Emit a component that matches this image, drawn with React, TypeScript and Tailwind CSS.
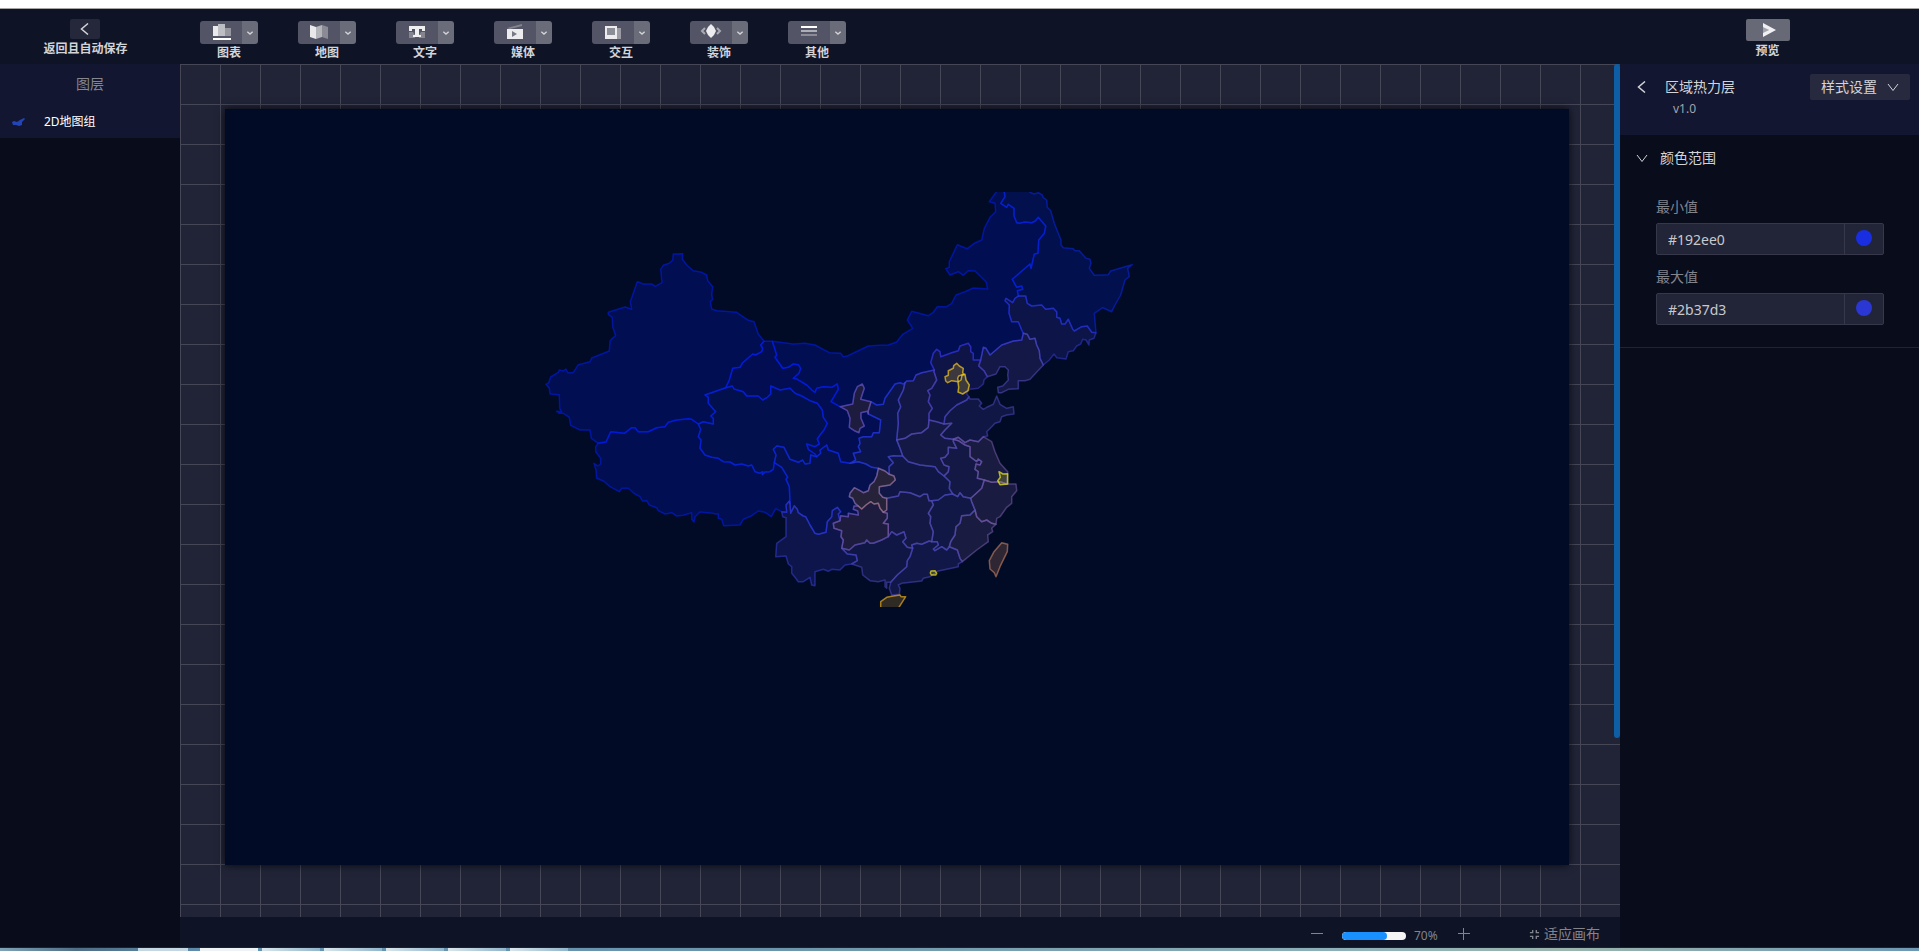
import type { ReactNode } from "react";

const FONT = "font-['Noto_Sans','Noto_Sans_CJK_SC',sans-serif]";

/* Border arcs, digitised on four survey sheets at three units per pixel. */
const SHEETS: Record<string, [number, number]> = {
  W: [1590, 720],
  C: [2280, 1020],
  N: [2640, 540],
  E: [2460, 1110],
};

const ARCS: Record<string, string> = {
  xjOut:
    "W 702,304 685,282 672,245 655,241 620,217 560,212 545,207 541,185 548,178 545,165 548,140 533,122 530,105 515,97 490,92 470,75 457,57 458,41 430,42 428,60 418,70 400,76 392,88 396,128 376,139 365,132 340,132 322,125 301,185 305,208 285,201 235,217 235,223 247,232 248,260 257,287 247,295 240,303 238,333 185,354 180,365 145,374 130,398 113,398 108,387 100,393 88,390 85,397 62,411 56,428 48,433 58,445 60,462 88,464 89,505 94,515 80,514 88,520 100,520 118,532 122,556 150,570 180,570 184,595 205,610",
  xjXz: "W 205,610 228,606 242,575 283,580 305,563 315,563 325,575 355,575 380,563 405,560 415,547 440,540 475,536 485,538 505,552",
  xjQh: "W 505,552 520,545 550,552 550,535 542,528 557,515 535,490 535,472 525,465 587,443",
  xjGs: "W 587,443 598,420 608,385 630,382 638,368 668,342 677,345 695,335 698,325 692,315 702,304",
  gsOut: "W 702,304 727,304",
  xzOut:
    "W 205,610 197,620 197,635 212,655 212,672 203,678 192,670 198,690 200,715 222,724 240,740 268,755 275,745 295,745 315,762 330,770 337,783 350,782 358,795 380,803 385,812 405,822 425,818 440,828 460,826 485,818 485,838 492,846 495,830 510,816 548,820 557,822 565,822 565,835 575,838 581,857 630,855 640,838 665,827 685,813 705,817 724,830 737,806 755,815",
  xzQh: "W 505,552 512,568 505,590 513,600 510,625 525,645 545,652 565,655 580,665 600,666 615,675 635,672 655,678 665,675 675,695 690,700 698,695 697,704 705,696 720,695 730,688 733,668",
  xzSc: "W 733,668 755,682 773,712 768,718 778,740 780,790",
  xzYn: "W 755,815 770,817 768,795 778,783 780,790",
  gsQh: "C -103,143 -83,138 -78,147 -50,155 -40,168 -5,168 8,180 22,172 32,162 32,138 60,150 90,145 105,160 125,168 150,182 172,190 187,210 190,232 202,250 192,270 180,285 172,297 178,312 165,320 140,312 145,328 165,342 170,350",
  qhSc: "C 170,350 152,345 150,370 135,372 128,360 115,367 90,358 72,322 50,318 40,328 48,345 43,368",
  gsSc: "C 170,350 182,340 180,330 200,315 205,330 235,340 242,365 270,370",
  gsSn: "C 270,370 287,360 280,340 302,335 295,320 300,310 297,295 310,290 335,290 340,278 358,278 362,240 325,222",
  gsNm: "C 37,4 50,45 45,52 68,85 85,82 100,72 115,74 122,85 117,100 100,115 112,118 140,135 155,150 165,157 170,145 190,140 215,142 232,132 235,148 213,185 240,200",
  nxNm: "C 240,200 278,192 283,160 292,140 307,132 313,145 302,178 333,185",
  nxSn: "C 333,185 325,212 325,222",
  nxGs: "C 325,222 322,214 303,218 303,235 313,258 300,265 297,278 283,272 268,262 270,235 262,212 240,200",
  nmSn: "C 333,185 350,195 370,193 375,175 405,132 420,128 430,132 435,128",
  nmOutW: "C 37,4 100,12 135,10 165,15 208,38 242,40 250,50 262,48 325,18 360,16",
  nmOutN:
    "N 0,496 25,495 50,486 68,463 98,445 82,420 95,394 145,407 160,397 172,380 200,380 215,370 228,345 255,335 280,324 323,327 318,305 285,273 265,272 250,286 235,275 210,285 197,266 208,262 208,245 232,194 262,206 283,190 305,180 313,145 330,112 347,95 345,70 328,65 348,37 350,20",
  nmHl: "N 415,348 412,332 428,328 425,318 410,322 397,298 450,252 453,265 463,222 474,220 476,180 493,160 497,138 475,112 466,123 455,128 435,126 418,130 410,128 402,108 402,85 385,73 380,82 362,70 375,50 370,20",
  hlOut:
    "N 370,20 440,20 450,37 462,42 475,38 487,45 490,53 500,60 502,82 512,92 523,130 543,180 543,195 550,203 580,206 585,212 598,212 618,235 630,238 633,250 628,265 643,286 685,284 692,273 720,265 745,257 757,254 743,265 748,290 735,300 722,345 705,375 695,395 668,383 643,400 648,458",
  hlJl: "N 415,348 437,348 442,370 455,378 485,375 497,388 520,385 530,395 530,412 540,415 545,432 555,432 565,418 578,448 583,453 605,440 622,438 635,457 648,458",
  nmJl: "N 430,460 425,450 415,425 395,425 387,400 388,375 375,362 378,355 398,368 405,355 415,348",
  jlOut: "N 648,458 642,475 628,480 627,495 618,480 608,478 602,492 590,498 580,512 565,515 558,537 530,533 522,522 508,540 490,555",
  jlLn: "N 430,460 442,463 450,478 465,475 470,495 478,512 480,535 490,555",
  nmLn: "N 302,540 310,502 318,505 330,525 345,512 365,495 385,488 400,483 425,480 430,460",
  lnOut: "N 490,555 450,598 435,602 415,602 415,626 385,628 365,638 355,638 353,622 368,618 385,600 383,585 385,570 375,560 360,560 348,582 322,590",
  lnHe: "N 302,540 296,558 312,572 322,590",
  heOut: "N 322,590 312,600 310,612 295,625 270,628 262,635 260,642 267,650",
  nmHe: "N 163,570 152,548 160,520 170,508 180,515 182,530 215,518 235,512 240,498 265,490 272,500 272,515 280,520 280,540 302,540",
  nmSx: "N 75,608 80,603 100,602 108,585 125,578 163,570",
  sxSn: "C 435,128 430,150 415,180 422,200 413,220 415,250 410,300",
  sxHa: "E 230,210 255,205 275,192 305,188 325,172 327,150",
  sxHe: "E 327,150 327,130 337,115 325,95 330,75 323,62 335,55 350,30 342,5 343,0",
  snHa: "E 230,210 240,235 248,258",
  heHa: "E 327,150 350,155 372,162",
  heSd: "E 447,80 440,90 410,105 390,122 375,140 372,162",
  sdOut: "E 447,80 450,87 475,87 485,100 478,108 490,118 500,112 520,103 530,78 540,103 560,115 580,110 582,132 560,135 545,140 540,155 525,160 515,170 500,185 503,198 490,200",
  sdHa: "E 372,162 395,160 375,180 362,195 375,205 400,208",
  sdJs: "E 490,200 475,215 450,210 435,218 415,202 400,208",
  haAh: "E 400,208 400,215 410,235 385,232 385,250 375,262 362,265 372,285 387,290 385,305 372,318",
  ahJs: "E 400,208 415,212 435,225 450,230 450,260 470,275 475,267 485,275 480,285 468,282 465,298 475,305 472,325 493,330",
  jsOut: "E 490,200 515,215 525,245 540,280 563,305 560,342",
  jsZj: "E 493,330 515,337 540,335 560,342",
  zjOut: "E 560,342 588,342 590,362 575,380 575,400 560,412 540,440 530,445 528,463",
  zjAh: "E 493,330 485,355 460,378 452,385",
  zjJx: "E 452,385 455,395 465,420",
  zjFj: "E 465,420 470,440 485,455 500,450 515,460 528,463",
  fjOut: "E 528,463 515,475 518,485 503,495 505,515 470,540 427,575",
  fjJx: "E 465,420 450,435 425,437 420,460 408,470 405,495 392,515 388,530",
  fjGd: "E 388,530 412,540 420,565 427,575",
  ahJx: "E 452,385 430,380 420,368 413,380 398,372",
  ahHb: "E 372,318 390,335 388,355 398,372",
  haHb: "E 248,258 265,275 300,285 345,290 355,305 372,318",
  hbJx: "E 398,372 375,375 355,390 335,392",
  hbHn: "E 200,385 235,378 240,365 270,368 300,380 310,373 322,373 327,392 335,392",
  snHb: "C 388,403 387,380 400,368 385,350 400,347 428,348",
  cqSn: "C 355,385 375,393 388,403",
  cqHb: "C 388,403 402,408 406,420 390,435 358,440 358,460 368,472 380,475",
  cqHn: "C 380,475 380,510 370,517",
  cqGz: "C 370,517 360,505 355,490 342,492 332,485 318,495 305,507 295,498",
  cqSc: "C 295,498 285,490 278,475 268,470 270,460 283,443 300,452 310,458 325,452 330,435 342,425 350,408 355,385",
  scSn: "C 270,370 295,365 318,372 335,382 355,385",
  scYn: "C 90,490 92,520 103,497 112,508 115,518 130,528 137,530 150,555 165,580 175,583 198,577 202,545 215,530 217,512 232,502 242,515 235,522 240,542",
  scGz: "C 240,542 242,527 265,530 265,520 295,525 293,513 280,508 282,498 295,498",
  ynOut: "C 65,515 68,530 78,533 78,590 50,610 47,650 78,648 85,672 95,680 95,700 105,712 115,725 130,725 150,712 155,735 165,737 165,695 190,688 205,694 215,688 240,690 255,675 275,672",
  ynGx: "C 275,672 292,662 288,645 262,642 245,625",
  ynGz: "C 245,625 250,600 243,590 245,572 222,565 220,550 240,542",
  gzHn: "C 370,517 382,520 382,535 370,550 385,552 385,590",
  gzGx: "E 65,535 88,540 105,525 135,518 140,510 150,520 160,520 185,510 205,500",
  hnGx: "E 205,500 215,485 230,495 252,485 258,505 248,515 262,532 278,535",
  hnGd: "E 278,535 275,525 290,520 305,523 328,513 335,515",
  hnJx: "E 335,392 340,405 325,430 332,440 330,460 340,485 335,515",
  gdJx: "E 335,515 352,515 355,525 340,537 345,542 365,530 380,540 388,530",
  gxGd: "E 278,535 270,560 262,572 260,590 232,615 212,637",
  gxOut: "E 95,582 125,592 128,615 150,632 175,635 195,630 195,650 200,655 200,637 212,637",
  gdOut: "E 212,637 208,655 215,675 238,673 240,655 235,645 245,640 305,633 310,625 330,620 355,603 415,590 415,582 427,575",
  hainan: "E 182,720 182,695 200,682 220,678 240,675 243,680 257,680 235,715 230,720",
  taiwan: "E 545,518 563,523 562,545 540,590 528,620 523,608 510,597 508,572 522,545",
  hongkong: "E 333,603 345,602 350,610 347,615 334,615 331,609",
  shanghai: "E 537,305 549,312 563,311 563,342 540,344 533,332 541,322",
  beijing: "N 230,550 238,558 250,565 248,578 252,583 236,588 233,595 235,605 215,602 203,608 197,603 195,590 205,586 205,572 220,565 221,557",
  tianjin: "N 255,583 258,600 268,615 264,632 248,642 234,636 236,622 234,606 243,600 246,586",
};

const PROVINCES: [string, string][] = [
  ["#001eff", "xjOut xjXz xjQh xjGs"],
  ["#001eff", "xzOut xzYn -xzSc -xzQh -xjXz"],
  ["#0a28f0", "xzQh -qhSc -gsQh -xjQh"],
  ["#0520ff", "gsOut gsNm -nxGs -gsSn -gsSc -gsQh xjGs"],
  ["#001eff", "nmOutW nmOutN -nmHl -nmJl -nmLn -nmHe -nmSx -nmSn -nxNm -gsNm"],
  ["#142df0", "gsSc scSn -cqSc -scGz -scYn -xzSc -qhSc"],
  ["#3c41dc", "ynOut ynGx ynGz -scYn -xzYn"],
  ["#3241e1", "gsSn -nxSn nmSn sxSn snHa -snHb -cqSn -scSn"],
  ["#8c64a0", "nxNm nxSn nxGs"],
  ["#0a28f0", "hlOut -hlJl nmHl"],
  ["#373cd2", "hlJl jlOut -jlLn nmJl"],
  ["#5a50c8", "nmLn jlLn lnOut -lnHe"],
  ["#463cc8", "nmHe lnHe heOut heSd -heHa sxHe"],
  ["#554bc8", "nmSx -sxHe -sxHa -sxSn"],
  ["#4f4bc3", "sdOut sdJs -sdHa -heSd"],
  ["#5f52be", "sxHa heHa sdHa haAh -haHb -snHa"],
  ["#5a50be", "haAh ahHb -ahJx -zjAh -ahJs"],
  ["#7d5fb0", "jsOut -jsZj -ahJs -sdJs"],
  ["#7d5fb0", "zjOut -zjFj -zjJx -zjAh jsZj"],
  ["#7a5fb0", "zjFj fjOut -fjGd -fjJx"],
  ["#5550c3", "hbJx hnJx gdJx -fjJx -zjJx ahJx"],
  ["#4b4bc8", "snHb haHb ahHb hbJx -hbHn -cqHb"],
  ["#5a50be", "hbHn hnJx -hnGd -hnGx -gzHn -cqHn"],
  ["#8c64a5", "cqGz -scGz -ynGz gzGx -gzHn"],
  ["#b4828c", "cqSn cqHb cqHn cqGz cqSc"],
  ["#504bc3", "gzGx hnGx gxGd -gxOut ynGx"],
  ["#504bc8", "hnGd gdJx fjGd -gdOut -gxGd"],
  ["#e6966e", "taiwan"],
];

const CITIES: [string, string][] = [
  ["#e6aa1e", "hainan"],
  ["#f0e614", "hongkong"],
  ["#f0f01e", "shanghai"],
  ["#f5c81e", "beijing"],
  ["#f5d21e", "tianjin"],
];

function arcPoints(name: string): string[] {
  const reversed = name.startsWith("-");
  const [sheet, ...pairs] = ARCS[reversed ? name.slice(1) : name].split(" ");
  const [ox, oy] = SHEETS[sheet];
  const points = pairs.map((pair) => {
    const [x, y] = pair.split(",").map(Number);
    return `${((x + ox) / 3).toFixed(1)} ${((y + oy) / 3).toFixed(1)}`;
  });
  return reversed ? points.reverse() : points;
}

/* Walks the arcs of one province, turning each so that it starts where the last one ended. */
function outline(arcs: string) {
  return `M${arcs.split(" ").flatMap(arcPoints).join("L")}Z`;
}

function ChinaMap() {
  return (
    <svg viewBox="225 192 1344 415" className="block w-full" role="img" aria-label="2D地图组" strokeLinejoin="round">
      {PROVINCES.map(([color, arcs]) => (
        <path key={arcs} d={outline(arcs)} fill={color} fillOpacity={0.2} stroke={color} strokeOpacity={0.52} strokeWidth={1.5} />
      ))}
      {CITIES.map(([color, arcs]) => (
        <path key={arcs} d={outline(arcs)} fill={color} fillOpacity={0.2} stroke={color} strokeOpacity={0.7} strokeWidth={1.5} />
      ))}
    </svg>
  );
}

function Chevron({ className, d }: { className: string; d: string }) {
  return (
    <svg viewBox="0 0 12 12" className={className} fill="none" stroke="currentColor" aria-hidden="true">
      <path d={d} />
    </svg>
  );
}
const LEFT = "M9 .5L2.500 6L9 11.500";
const DOWN = "M1 3L6 9.500L11 3";

const TOOLS: { label: string; icon: ReactNode }[] = [
  {
    label: "图表",
    icon: (
      <>
        <path d="M3 5h5v10H3z" fill="#e9e9ec" />
        <path d="M8 3h7v12H8z" fill="#bdbdc4" />
        <path d="M15 7h6v8h-6z" fill="#96969f" />
        <path d="M3 17h18v2H3z" fill="#fff" />
      </>
    ),
  },
  {
    label: "地图",
    icon: (
      <>
        <path d="M2 4l6 2v12l-6-2z" fill="#e9e9ec" />
        <path d="M8 6l6-2v12l-6 2z" fill="#b4b4bb" />
        <path d="M14 4l6 2v12l-6-2z" fill="#8b8b95" />
      </>
    ),
  },
  {
    label: "文字",
    icon: (
      <>
        <path d="M3 5h16v5h-3V8h-3v6h2v2H7v-2h2V8H6v2H3z" fill="#f0f0f2" />
        <path d="M3 11h4l2 3v3H3zM19 11h-4l-2 3v3h6z" fill="#85858f" />
        <path d="M7 14h8v2H7z" fill="#f0f0f2" />
      </>
    ),
  },
  {
    label: "媒体",
    icon: (
      <>
        <path d="M3 7L18 3v2L6 8z" fill="#85858f" />
        <path d="M3 8h16v10H3z" fill="#ececef" />
        <path d="M8 10l5 3-5 3z" fill="#777985" />
      </>
    ),
  },
  {
    label: "交互",
    icon: (
      <>
        <path d="M15 7h4v11H7v-2h8z" fill="#9b9ba4" />
        <path d="M3 5h12v13H3z" fill="#ececef" />
        <path d="M5 7h8v7H5z" fill="#8b8d97" />
      </>
    ),
  },
  {
    label: "装饰",
    icon: (
      <>
        <path d="M5 7l-3 3 3 3M17 7l3 3-3 3" fill="none" stroke="#a9a9b2" strokeWidth="2" />
        <path d="M11 3l3 3 2 4-2 4-3 3-3-3-2-4 2-4z" fill="#ececef" />
      </>
    ),
  },
  {
    label: "其他",
    icon: (
      <>
        <path d="M3 5h16v2H3z" fill="#fff" />
        <path d="M3 9h16v2H3z" fill="#aeaeb6" />
        <path d="M3 13h16v2H3z" fill="#8b8b95" />
      </>
    ),
  },
];

function Tool({ label, icon }: { label: string; icon: ReactNode }) {
  return (
    <button type="button" className="flex w-[58px] flex-col items-center text-[#d3d4d8]">
      <span className="flex h-[23px] w-full overflow-hidden rounded-[3px]">
        <span className="flex flex-1 items-start justify-center bg-[#535566]">
          <svg viewBox="0 0 22 20" className="h-5 w-[22px]" aria-hidden="true">
            {icon}
          </svg>
        </span>
        <span className="flex w-4 items-center justify-center bg-[#6a6c79]">
          <Chevron className="size-2 stroke-2" d="M2 4L6 7.500L10 4" />
        </span>
      </span>
      <span className="text-xs font-bold leading-[17px]">{label}</span>
    </button>
  );
}

function ColorField({ id, label, value, dot }: { id: string; label: string; value: string; dot: string }) {
  return (
    <div className="flex flex-col">
      <label htmlFor={id} className="h-7 text-sm leading-6 text-[#82848c]">
        {label}
      </label>
      <div className="flex h-8 w-[228px] rounded-[2px] border border-[#363849] bg-[#222537]">
        <input
          id={id}
          defaultValue={value}
          className="min-w-0 flex-1 bg-transparent px-[11px] pt-[2px] text-sm text-[#c8c9cd] outline-none"
        />
        <button
          type="button"
          aria-label={`${label} ${value}`}
          className="flex w-[39px] items-start justify-center border-l border-[#363849] pt-[6px]"
        >
          <span className={`size-4 rounded-full ${dot}`} />
        </button>
      </div>
    </div>
  );
}

function TopBar() {
  return (
    <header className="flex h-[55px] bg-[#0f1326]">
      <div className="flex w-[180px] justify-center">
        <button type="button" className="mr-[9px] flex flex-col items-center pt-[10px] text-[#d3d4d8]">
          <span className="flex h-5 w-[30px] items-center justify-center rounded-[2px] bg-[#25283b]">
            <Chevron className="size-3 stroke-[1.500]" d={LEFT} />
          </span>
          <span className="text-xs font-bold leading-5">返回且自动保存</span>
        </button>
      </div>
      <nav className="flex flex-1 items-start gap-10 pl-5 pt-3">
        {TOOLS.map((tool) => (
          <Tool key={tool.label} {...tool} />
        ))}
      </nav>
      <div className="flex w-[299px] justify-center">
        <button type="button" className="mr-[4px] flex flex-col items-center pt-[10px] text-[#d3d4d8]">
          <span className="flex h-[22px] w-11 items-center justify-center rounded-[2px] bg-[#676976]">
            <svg viewBox="0 0 16 16" className="ml-[2px] size-4" aria-hidden="true">
              <path d="M2 4l6 4-6 4z" fill="#a2a3ac" />
              <path d="M2 1l13 7-13 7v-4l6-3-6-3z" fill="#f0f0f2" />
            </svg>
          </span>
          <span className="text-xs font-bold leading-5">预览</span>
        </button>
      </div>
    </header>
  );
}

function LayerPanel() {
  return (
    <aside className="w-[180px] bg-[#090c1b]">
      <div className="bg-[#121630]">
        <h2 className="h-10 text-center text-sm leading-10 text-[#85878f]">图层</h2>
        <button type="button" className="flex h-[34px] w-full items-center pl-[10px] pt-[2px] text-xs text-white">
          <svg viewBox="0 0 16 12" className="mr-[18px] h-3 w-4" aria-hidden="true">
            <path d="M2 6l2-1 3 1 3-2 4-2 1 1-3 3v3l-3 1-3-1-3 0z" fill="#2344b8" />
          </svg>
          2D地图组
        </button>
      </div>
    </aside>
  );
}

function Workspace() {
  return (
    <main className="flex min-w-0 flex-1 flex-col">
      <div className="flex flex-1 items-start justify-between bg-[#212437] bg-[linear-gradient(to_right,#454757_1px,transparent_1px),linear-gradient(to_bottom,#454757_1px,transparent_1px)] bg-[size:40px_40px]">
        <section className="mx-[45px] mt-[45px] aspect-[16/9] flex-1 bg-[#020b26] pt-[83px] shadow-[0_0_8px_rgba(0,0,0,0.8)]">
          <ChinaMap />
        </section>
        <div className="h-[674px] w-[6px] rounded-full bg-[#0e5ea6]" />
      </div>
      <footer className="flex h-[30px] items-center justify-end bg-[#0f1326] pr-5 pt-1 text-[#82848c]">
        <button type="button" aria-label="缩小" className="mr-[19px]">
          <svg viewBox="0 0 12 12" className="size-3" stroke="currentColor" aria-hidden="true">
            <path d="M0 5.500h12" />
          </svg>
        </button>
        <div className="mt-1 h-2 w-16 overflow-hidden rounded-full bg-[#f5f5f5]">
          <div className="h-full w-[70%] rounded-full bg-[#1890ff]" />
        </div>
        <span className="ml-2 mt-1 w-11 text-xs">70%</span>
        <button type="button" aria-label="放大">
          <svg viewBox="0 0 12 12" className="size-3" stroke="currentColor" aria-hidden="true">
            <path d="M0 5.500h12M5.500 0v12" />
          </svg>
        </button>
        <button type="button" className="ml-[59px] flex items-center gap-1 text-sm leading-5">
          <svg viewBox="0 0 12 12" className="size-[11px]" fill="none" stroke="currentColor" strokeWidth="1.500" aria-hidden="true">
            <path d="M4 1v3H1M8 1v3h3M4 11V8H1M8 11V8h3" />
          </svg>
          适应画布
        </button>
      </footer>
    </main>
  );
}

function SettingsPanel() {
  return (
    <aside className="w-[299px] bg-[#090c1b] text-[#d3d4d8]">
      <div className="flex h-[71px] items-start bg-[#121630] pl-4 pr-[9px] pt-[10px]">
        <button type="button" aria-label="返回" className="mr-[17px] flex h-[26px] items-center">
          <Chevron className="size-3 stroke-[1.500]" d={LEFT} />
        </button>
        <div className="flex-1">
          <h2 className="text-sm leading-[26px]">区域热力层</h2>
          <p className="pl-2 text-xs leading-[18px] text-[#a3a5ac]">v1.0</p>
        </div>
        <button type="button" className="flex h-[26px] w-[100px] items-center justify-between rounded-[2px] bg-[#272a3f] px-[11px] text-sm">
          样式设置
          <Chevron className="size-3" d={DOWN} />
        </button>
      </div>
      <section className="border-b border-[#202334] pb-[22px]">
        <button type="button" className="flex h-[46px] items-center gap-3 pl-4 text-sm">
          <Chevron className="size-3" d={DOWN} />
          颜色范围
        </button>
        <div className="flex flex-col gap-[10px] pl-9 pt-[14px]">
          <ColorField id="min" label="最小值" value="#192ee0" dot="bg-[#192ee0]" />
          <ColorField id="max" label="最大值" value="#2b37d3" dot="bg-[#2b37d3]" />
        </div>
      </section>
    </aside>
  );
}

function TaskStrip() {
  return (
    <div className="flex h-1 border-t border-[#17222f] bg-[linear-gradient(to_right,#7fa3b8,#4f6f86_4%,#6394b4_12%,#6b95ab_40%,#8db0b8_70%,#9bb5ad_82%,#6d98b5)] pl-[138px]">
      <span className="w-[50px] bg-[#c3d8e2]" />
      <span className="ml-3 w-[58px] bg-[#eef3f6]" />
      {[1, 2, 3, 4, 5].map((n) => (
        <span key={n} className="ml-1 w-[58px] bg-[linear-gradient(to_right,#d9e6ec,#92b6cc)]" />
      ))}
    </div>
  );
}

export default function App() {
  return (
    <div className={`flex min-h-screen flex-col bg-[#0f1326] ${FONT}`}>
      <div className="h-[9px] border-b border-[#a5a5a5] bg-white" />
      <TopBar />
      <div className="flex flex-1">
        <LayerPanel />
        <Workspace />
        <SettingsPanel />
      </div>
      <TaskStrip />
    </div>
  );
}
